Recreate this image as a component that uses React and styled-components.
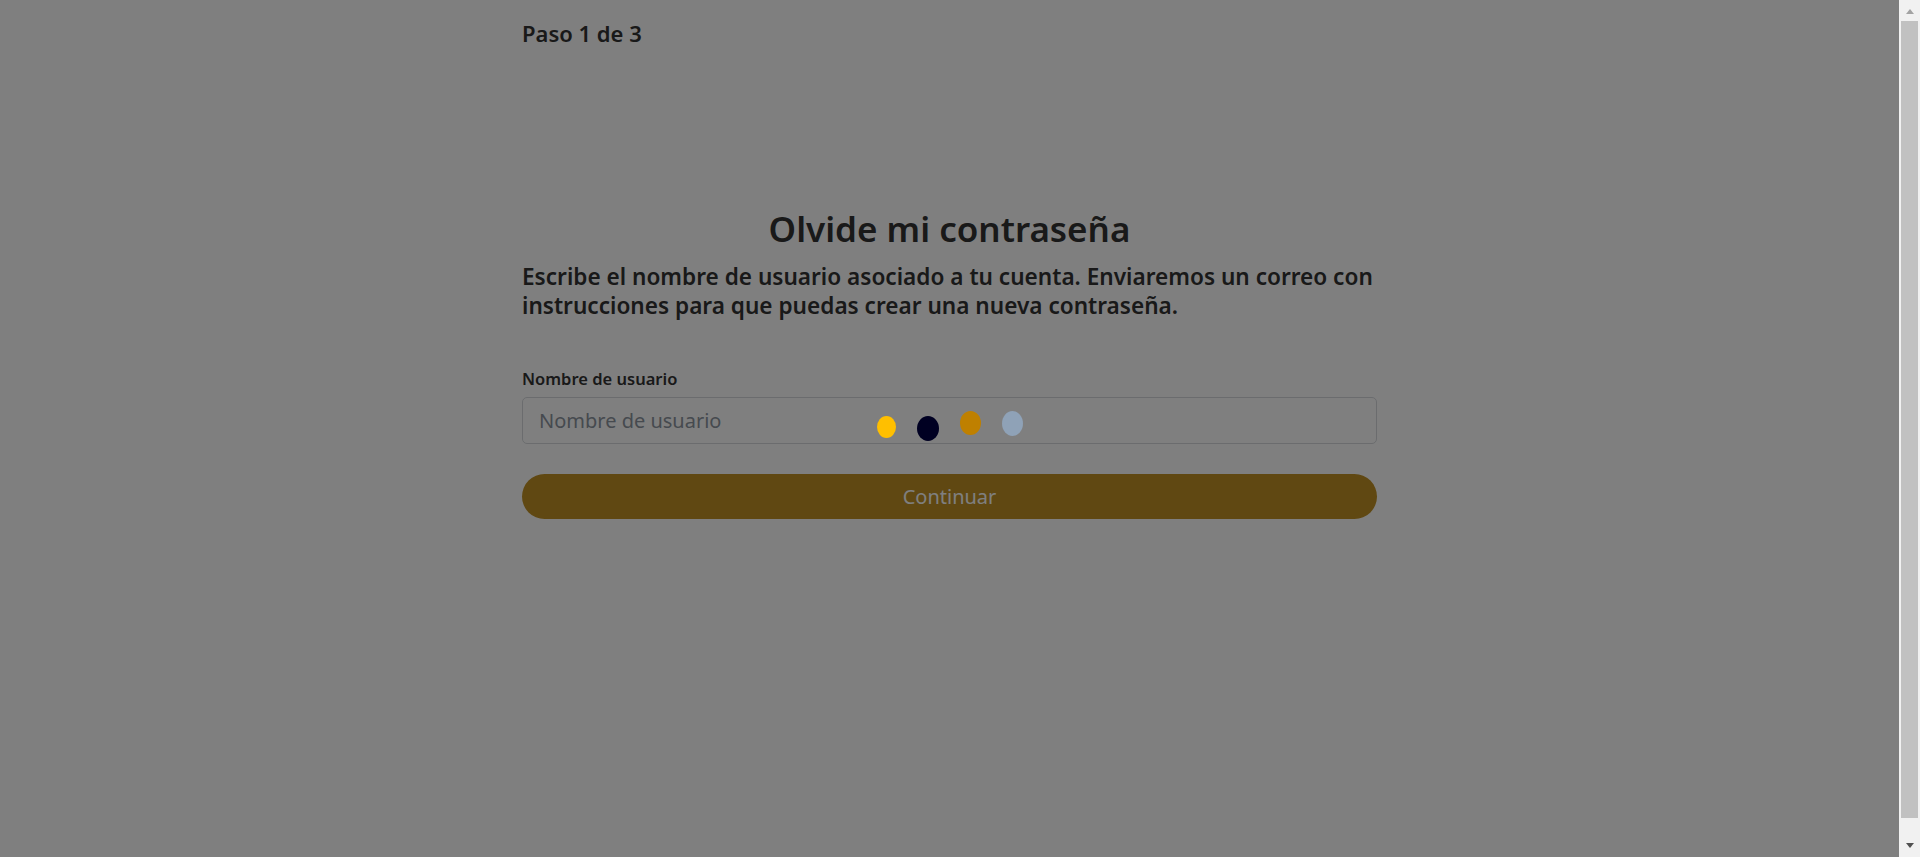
import styled, { createGlobalStyle } from "styled-components";

const GlobalStyle = createGlobalStyle`
  *, *::before, *::after {
    box-sizing: border-box;
  }
  body {
    margin: 0;
    background: #fff;
    color: #333;
    font-family: "Noto Sans", "Open Sans", sans-serif;
  }
`;

const Shell = styled.div`
  display: flex;
  min-height: 100vh;
`;

const Page = styled.main`
  flex: 1;
  min-width: 0;
`;

const Container = styled.div`
  width: 855px;
  margin: 0 auto;
`;

const Step = styled.p`
  margin: 0;
  padding-top: 17px;
  font-size: 22px;
  font-weight: 600;
  line-height: 1.5;
`;

const Form = styled.form`
  display: flex;
  flex-direction: column;
  margin-top: 158px;
`;

const Title = styled.h1`
  margin: 0;
  font-size: 35px;
  font-weight: 600;
  line-height: 1.2;
  text-align: center;
`;

const Lead = styled.p`
  margin: 12px 0 0;
  font-size: 22.6px;
  font-weight: 600;
  line-height: 29px;
`;

const Field = styled.div`
  display: flex;
  flex-direction: column;
  gap: 6px;
  margin-top: 47px;
`;

const Label = styled.label`
  font-size: 16.5px;
  font-weight: 600;
  line-height: 24px;
`;

const Input = styled.input`
  height: 47px;
  padding: 0 16px;
  border: 1px solid #d6d9dd;
  border-radius: 5px;
  background: #fff;
  font-family: inherit;
  font-size: 20px;
  color: #333;

  &::placeholder {
    color: #8c949e;
  }
`;

const Button = styled.button`
  height: 45px;
  margin-top: 30px;
  border: 0;
  border-radius: 23px;
  background: #c09024;
  color: #fff;
  font-family: inherit;
  font-size: 20px;
  cursor: pointer;
`;

/* browser-style scrollbar at the right edge */
const ScrollTrack = styled.div`
  flex-shrink: 0;
  display: flex;
  flex-direction: column;
  width: 21px;
  height: 100vh;
  background: #f1f1f1;
`;

const ScrollButton = styled.div`
  display: flex;
  justify-content: center;
  height: 21px;
  padding-top: ${(p) => (p.$dir === "up" ? 9 : 7)}px;

  &::before {
    content: "";
    width: 0;
    height: 0;
    border-left: 4.5px solid transparent;
    border-right: 4.5px solid transparent;
    ${(p) =>
      p.$dir === "up"
        ? "border-bottom: 5px solid #a3a3a3;"
        : "border-top: 5px solid #505050;"}
  }
`;

const ScrollThumb = styled.div`
  height: 797px;
  margin: 0 2px;
  background: #c1c1c1;
`;

const ScrollSpacer = styled.div`
  flex: 1;
`;

const Overlay = styled.div`
  position: fixed;
  top: 0;
  left: 0;
  bottom: 0;
  right: 21px;
  z-index: 10;
  display: flex;
  align-items: center;
  justify-content: center;
  background: rgba(0, 0, 0, 0.5);
`;

const Dots = styled.div`
  display: flex;
  align-items: center;
  gap: 21px;
`;

const Dot = styled.span`
  width: ${(p) => p.$w}px;
  height: ${(p) => p.$h}px;
  border-radius: 50%;
  background: ${(p) => p.$color};
  transform: translateY(${(p) => p.$y}px);
`;

const dots = [
  { color: "#ffbf00", w: 19, h: 22, y: -2 },
  { color: "#000022", w: 22, h: 25, y: 0 },
  { color: "#bf8000", w: 21, h: 24, y: -6 },
  { color: "#8fa2b7", w: 21, h: 25, y: -5 },
];

export default function App() {
  return (
    <>
      <GlobalStyle />
      <Shell>
        <Page>
          <Container>
            <Step>Paso 1 de 3</Step>
            <Form onSubmit={(e) => e.preventDefault()}>
              <Title>Olvide mi contraseña</Title>
              <Lead>
                Escribe el nombre de usuario asociado a tu cuenta. Enviaremos un
                correo con instrucciones para que puedas crear una nueva
                contraseña.
              </Lead>
              <Field>
                <Label htmlFor="username">Nombre de usuario</Label>
                <Input id="username" placeholder="Nombre de usuario" />
              </Field>
              <Button type="submit">Continuar</Button>
            </Form>
          </Container>
        </Page>
        <ScrollTrack>
          <ScrollButton $dir="up" />
          <ScrollThumb />
          <ScrollSpacer />
          <ScrollButton $dir="down" />
        </ScrollTrack>
      </Shell>
      <Overlay>
        <Dots>
          {dots.map((d, i) => (
            <Dot key={i} $color={d.color} $w={d.w} $h={d.h} $y={d.y} />
          ))}
        </Dots>
      </Overlay>
    </>
  );
}
